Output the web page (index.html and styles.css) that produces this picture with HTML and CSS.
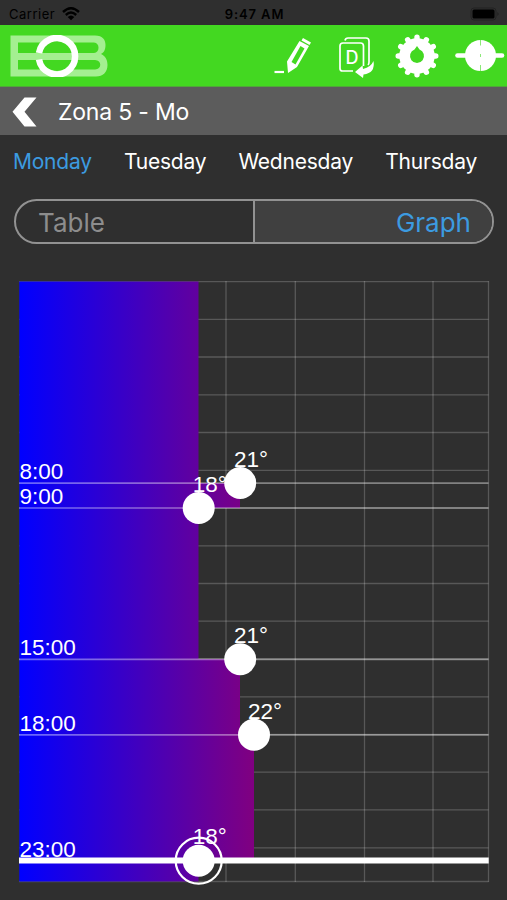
FILE: index.html
```html
<!DOCTYPE html>
<html lang="en">
<head>
  <meta charset="UTF-8">
  <meta name="viewport" content="width=device-width, initial-scale=1.0">
  <title>Zona 5 - Mo</title>
  <link rel="stylesheet" href="styles.css">
</head>
<body>
  <div class="statusbar">
    <div class="carrier">
      <span>Carrier</span>
      <svg width="18" height="14" viewBox="0 0 18 14">
        <path d="M1 5Q9 -2.500 17 5M3.800 8Q9 3.200 14.200 8" fill="none" stroke="#000" stroke-width="2.400"/>
        <path d="M5.700 10Q9 7 12.300 10L9 13.300Z"/>
      </svg>
    </div>
    <span class="clock">9:47 AM</span>
    <svg class="battery" width="30" height="14" viewBox="0 0 30 14">
      <rect x="1" y="1" width="25" height="12" rx="3" fill="none" stroke="#222"/>
      <rect x="2.500" y="2.500" width="22" height="9" rx="1.500"/>
      <path d="M27.500 5Q29.500 7 27.500 9Z" fill="#1c1c1c"/>
    </svg>
  </div>

  <header class="header">
    <svg class="logo" width="98" height="42" viewBox="0 0 98 42">
      <path class="logo-letters" fill-rule="evenodd" d="M0.500 0.500H85C93 0.500 95.500 5 95.500 10C95.500 16 93 18 91 19C95 21 97.500 24 97.500 30C97.500 37 93 41.500 86 41.500H0.500ZM8 7.500V18H84C90 18 90 7.500 84 7.500ZM8 25V34.500H85C92 34.500 92 25 85 25Z"/>
      <circle class="logo-hole" cx="47" cy="21" r="15"/>
      <path class="logo-letters" d="M27 18H67V25H27Z"/>
      <path class="logo-ring" d="M29 18A18.200 18.200 0 1 1 29 24.500"/>
    </svg>
    <nav class="tools">
      <svg width="40" height="44" viewBox="272 34 40 44">
        <path d="M274.500 72H284" fill="none" stroke="#fff" stroke-width="2.200"/>
        <path fill="#fff" fill-rule="evenodd" d="M287 61.500L299.500 41L309 46L297 67L288 73ZM291.500 62L295.500 64.500L304.500 48.500L300.500 46Z"/>
        <path fill="#fff" d="M303 38L311 42.500L309.500 45L301.500 40.500Z"/>
      </svg>
      <svg width="38" height="44" viewBox="338 35 38 44">
        <g fill="none" stroke="#fff" stroke-width="1.700">
          <path d="M345 41.500Q345.500 39 348 39H366Q369 39 369 42V63Q369 65 368 66"/>
          <path d="M353 72H342.500Q340 72 340 69.500V47Q340 44 343 44H360.500Q363.500 44 363.500 47V67"/>
        </g>
        <text class="doc-letter" x="345.500" y="64.800">D</text>
        <path fill="#fff" d="M355 73L362.500 66.500L363 70Q371 68 373.500 62Q375.500 74 363.500 75.500L363 79Z"/>
      </svg>
      <svg width="46" height="46" viewBox="-23 -23 46 46">
        <g stroke="#fff" stroke-width="5.400" stroke-linecap="round">
          <path d="M0 -18.800V18.800M-18.800 0H18.800"/>
          <path d="M0 -18.800V18.800M-18.800 0H18.800" transform="rotate(30)"/>
          <path d="M0 -18.800V18.800M-18.800 0H18.800" transform="rotate(60)"/>
        </g>
        <circle r="17.800" fill="#fff"/>
        <path class="gear-hole" d="M0 -10L2.500 -6.500A7 7 0 1 1 -2.500 -6.500Z"/>
      </svg>
      <svg width="52" height="34" viewBox="454 39 52 34">
        <path d="M457.500 55.500H502" stroke="#fff" stroke-width="4.600" stroke-linecap="round"/>
        <circle cx="480.500" cy="55.500" r="15.500" fill="#fff"/>
        <path class="dial-mark" d="M480.500 40V45.500M480.500 65V71M480.500 54V57"/>
      </svg>
    </nav>
  </header>

  <div class="titlebar">
    <svg width="26" height="30" viewBox="0 0 26 30">
      <path d="M12.500 0.500H24.500L12.500 14.800L24.500 29.500H12.500L0.500 14.800Z" fill="#fff"/>
    </svg>
    <h1>Zona 5 - Mo</h1>
  </div>

  <div class="days">
    <span class="day active">Monday</span>
    <span class="day">Tuesday</span>
    <span class="day">Wednesday</span>
    <span class="day">Thursday</span>
  </div>

  <div class="switch">
    <div class="option">Table</div>
    <div class="option selected">Graph</div>
  </div>

  <!-- x: temperature, y: hour of day (25.17px per hour) -->
  <svg class="graph" width="507" height="630" viewBox="0 270 507 630">
    <defs>
      <linearGradient id="heat" gradientUnits="userSpaceOnUse" x1="19" y1="0" x2="254" y2="0">
        <stop offset="0" stop-color="#0000ff"/>
        <stop offset="1" stop-color="#800080"/>
      </linearGradient>
    </defs>

    <path class="grid" d="M19 281.600H488.500M19 319.300H488.500M19 357H488.500M19 394.800H488.500M19 432.500H488.500M19 470.300H488.500M19 508H488.500M19 545.800H488.500M19 583.500H488.500M19 621.200H488.500M19 659H488.500M19 696.800H488.500M19 734.500H488.500M19 772.200H488.500M19 809.800H488.500M19 847.800H488.500M19 881.500H488.500"/>
    <path class="grid" d="M226 281V882M295.300 281V882M364.500 281V882M433 281V882M488.500 281V882"/>

    <path fill="url(#heat)" d="M19.300 281.500H198.500V483H240V508H198.500V659H240V734.700H254V860.500H198.500V881.500H19.300Z"/>

    <path class="hours" d="M19 483.100H488.500M19 508H488.500M19 659.300H488.500M19 734.900H488.500"/>
    <path class="current" d="M19 860.600H488.700"/>

    <g class="labels">
      <text x="19.500" y="479">8:00</text>
      <text x="19.500" y="504.200">9:00</text>
      <text x="19.500" y="655.200">15:00</text>
      <text x="19.500" y="730.800">18:00</text>
      <text x="19.500" y="856.500">23:00</text>
      <text x="234" y="467">21°</text>
      <text x="192.800" y="492">18°</text>
      <text x="234" y="643">21°</text>
      <text x="248" y="718.500">22°</text>
      <text x="192.800" y="844">18°</text>
    </g>

    <g fill="#fff">
      <circle cx="240.200" cy="483" r="16"/>
      <circle cx="198.700" cy="508" r="16"/>
      <circle cx="240.200" cy="659.200" r="16"/>
      <circle cx="254" cy="734.800" r="16"/>
      <circle cx="198.700" cy="860.700" r="16"/>
    </g>
    <circle class="current-ring" cx="198.700" cy="860.700" r="23"/>
  </svg>
</body>
</html>
```

FILE: styles.css
```css
* {
  box-sizing: border-box;
}
body {
  margin: 0;
  background-color: #2f2f2f;
  color: white;
  font-family: Inter, "Liberation Sans", sans-serif;
  overflow: hidden;
}
svg {
  display: block;
  flex-shrink: 0;
}
.statusbar {
  display: grid;
  grid-template-columns: 1fr auto 1fr;
  align-items: center;
  height: 25px;
  padding: 2px 7px 0 9px;
  color: black;
  font-size: 13px;
}
.carrier {
  display: flex;
  align-items: center;
  gap: 7px;
  letter-spacing: 0.5px;
}
.clock {
  font-weight: 600;
  letter-spacing: 0.9px;
}
.battery {
  justify-self: end;
}
.header {
  display: flex;
  align-items: center;
  justify-content: space-between;
  height: 62px;
  padding: 0 1px 0 10px;
  border-bottom: 1px solid #50a63a;
  background-color: #43d821;
}
.logo-letters {
  fill: #a4ef91;
}
.logo-hole {
  fill: #43d821;
}
.logo-ring {
  fill: none;
  stroke: white;
  stroke-width: 6.5;
}
.tools {
  display: flex;
  align-items: center;
}
.tools svg:nth-child(2) {
  margin-left: 26px;
}
.tools svg:nth-child(3) {
  margin-left: 18px;
}
.tools svg:nth-child(4) {
  margin-left: 14px;
}
.doc-letter {
  fill: white;
  font-size: 18px;
  font-weight: 500;
}
.gear-hole {
  fill: #43d821;
}
.dial-mark {
  stroke: #8be878;
  stroke-width: 1;
}
.titlebar {
  display: flex;
  align-items: center;
  gap: 20px;
  height: 48px;
  padding: 1px 12px 0;
  background-color: #5c5c5c;
}
.titlebar h1 {
  margin: 0;
  font-size: 23px;
  font-weight: 400;
  letter-spacing: -0.2px;
}
.days {
  display: flex;
  justify-content: space-between;
  align-items: center;
  height: 52px;
  padding: 0 30px 0 13px;
  font-size: 21px;
  letter-spacing: -0.22px;
}
.day.active {
  color: #3c9be0;
}
.switch {
  display: flex;
  height: 45px;
  margin: 12px 13px 0 14px;
  border: 2px solid #929292;
  border-radius: 23px;
  overflow: hidden;
}
.option {
  flex: 1;
  padding: 0 21px 0 22px;
  color: #8d8d8d;
  font-size: 26px;
  line-height: 43px;
}
.option.selected {
  border-left: 2px solid #929292;
  background-color: #404040;
  color: #3c9be0;
  text-align: right;
}
.graph {
  margin-top: 26px;
}
.grid {
  fill: none;
  stroke: white;
  stroke-opacity: 0.2;
  stroke-width: 1.3;
}
.hours {
  stroke: white;
  stroke-opacity: 0.4;
  stroke-width: 1.7;
}
.current {
  stroke: white;
  stroke-width: 6;
}
.current-ring {
  fill: none;
  stroke: white;
  stroke-width: 2.2;
}
.labels {
  fill: white;
  font-family: "Liberation Sans", Arial, sans-serif;
  font-size: 22.500px;
}
```
